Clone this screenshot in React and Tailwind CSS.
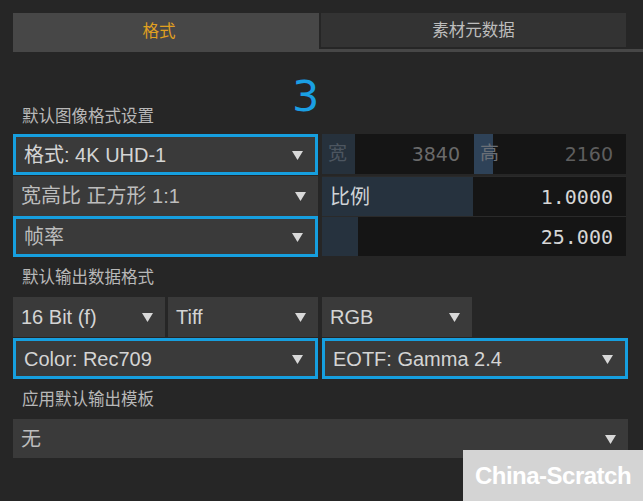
import React from 'react';

const FONT = { fontFamily: '"Liberation Sans", "Noto Sans CJK SC", sans-serif' };

const Arrow = () => (
  <svg width="11" height="10" viewBox="0 0 11 10" className="shrink-0">
    <path d="M0 1 L11 1 L5.5 10 Z" fill="#d8d8d8" />
  </svg>
);

const Dropdown = ({ label, width, active, dim }) => (
  <div
    className={`h-full flex items-center justify-between pl-[8px] pr-[12px] bg-[#3a3a3a] ${active ? 'border-[3px] border-[#169fdf] pl-[6px] pr-[9px]' : ''}`}
    style={{ width }}
  >
    <span className={`text-[20px] whitespace-nowrap ${dim ? 'text-[#bdbdbd]' : 'text-[#d4d4d4]'}`}>{label}</span>
    <Arrow />
  </div>
);

const SectionLabel = ({ children, className }) => (
  <div className={`pl-[9px] text-[16.5px] text-[#b8b8b8] ${className}`}>{children}</div>
);

const App = () => {
  return (
    <div className="relative w-[643px] h-[501px] bg-[#262626] overflow-hidden" style={FONT}>
      {/* tabs */}
      <div className="pt-[13px] pl-[13px]">
        <div className="flex items-start border-b-[3px] border-[#474747]">
          <div className="w-[306px] h-[36px] bg-[#474747] flex items-center justify-center pr-[14px] text-[16.5px] text-[#e0a020]">
            格式
          </div>
          <div className="ml-[2px] w-[305px] h-[34px] bg-[#333333] flex items-center justify-center text-[16.5px] text-[#bdbdbd]">
            素材元数据
          </div>
        </div>
      </div>

      {/* step marker */}
      <div className="h-[82px] relative">
        <span className="absolute left-[292px] top-[23px] text-[43px] leading-none text-[#1a9fe3]" style={{ fontFamily: '"DejaVu Sans", sans-serif' }}>
          3
        </span>
        <SectionLabel className="absolute left-[13px] top-[52px]">默认图像格式设置</SectionLabel>
      </div>

      <div className="pl-[13px] flex flex-col">
        {/* row 1 */}
        <div className="flex h-[41px]">
          <Dropdown label="格式: 4K UHD-1" width={305} active />
          <div className="ml-[4px] flex w-[304px] h-[40px] bg-[#151515]">
            <div className="w-[33px] bg-[#26313c] flex items-center pl-[6px] text-[19px] text-[#4d5660]">宽</div>
            <div className="w-[117px] flex items-center justify-end pr-[12px] text-[19px] text-[#6a6a6a]" style={{ fontFamily: '"DejaVu Sans", sans-serif' }}>3840</div>
            <div className="ml-[2px] w-[19px] bg-[#2e4258] flex items-center pl-[6px] text-[19px] text-[#6a6f76] overflow-visible whitespace-nowrap">高</div>
            <div className="flex-1 flex items-center justify-end pr-[13px] text-[19px] text-[#5e5e5e]" style={{ fontFamily: '"DejaVu Sans", sans-serif' }}>2160</div>
          </div>
        </div>
        {/* row 2 */}
        <div className="flex h-[40px] mt-[1px]">
          <Dropdown label="宽高比 正方形 1:1" width={305} dim />
          <div className="ml-[4px] flex w-[304px] bg-[#151515] border-t border-[#2a2a2a]">
            <div className="w-[151px] bg-[#26323e] flex items-center pl-[8px] text-[20px] text-[#cfd3d6]">比例</div>
            <div className="flex-1 flex items-center justify-end pr-[13px] text-[20px] text-[#d6d6d6]" style={{ fontFamily: '"DejaVu Sans Mono", monospace' }}>1.0000</div>
          </div>
        </div>
        {/* row 3 */}
        <div className="flex h-[41px]">
          <Dropdown label="帧率" width={305} active dim />
          <div className="ml-[4px] flex w-[304px] h-[40px] bg-[#151515] border-t border-[#2a2a2a]">
            <div className="w-[36px] bg-[#26323e]" />
            <div className="flex-1 flex items-center justify-end pr-[13px] text-[20px] text-[#d6d6d6]" style={{ fontFamily: '"DejaVu Sans Mono", monospace' }}>25.000</div>
          </div>
        </div>

        <SectionLabel className="mt-[10px] h-[30px] leading-[20px]">默认输出数据格式</SectionLabel>

        {/* row 4 */}
        <div className="flex h-[40px] gap-[3px]">
          <Dropdown label="16 Bit (f)" width={152} />
          <Dropdown label="Tiff" width={150} />
          <div className="ml-[1px]">
            <Dropdown label="RGB" width={150} />
          </div>
        </div>
        {/* row 5 */}
        <div className="flex h-[41px] mt-[1px]">
          <Dropdown label="Color: Rec709" width={305} active />
          <div className="ml-[4px]">
            <Dropdown label="EOTF: Gamma 2.4" width={306} active />
          </div>
        </div>

        <SectionLabel className="mt-[10px] h-[30px] leading-[20px]">应用默认输出模板</SectionLabel>

        {/* row 6 */}
        <div className="flex h-[39px]">
          <Dropdown label="无" width={615} dim />
        </div>
      </div>

      {/* watermark */}
      <div className="absolute left-[463px] top-[450px] w-[180px] h-[51px] bg-[#d4d4d4] flex items-center justify-center">
        <span className="text-[24px] font-bold text-white tracking-[-0.5px]" style={{ fontFamily: '"Liberation Sans", sans-serif' }}>China-Scratch</span>
      </div>
    </div>
  );
};

export default App;
